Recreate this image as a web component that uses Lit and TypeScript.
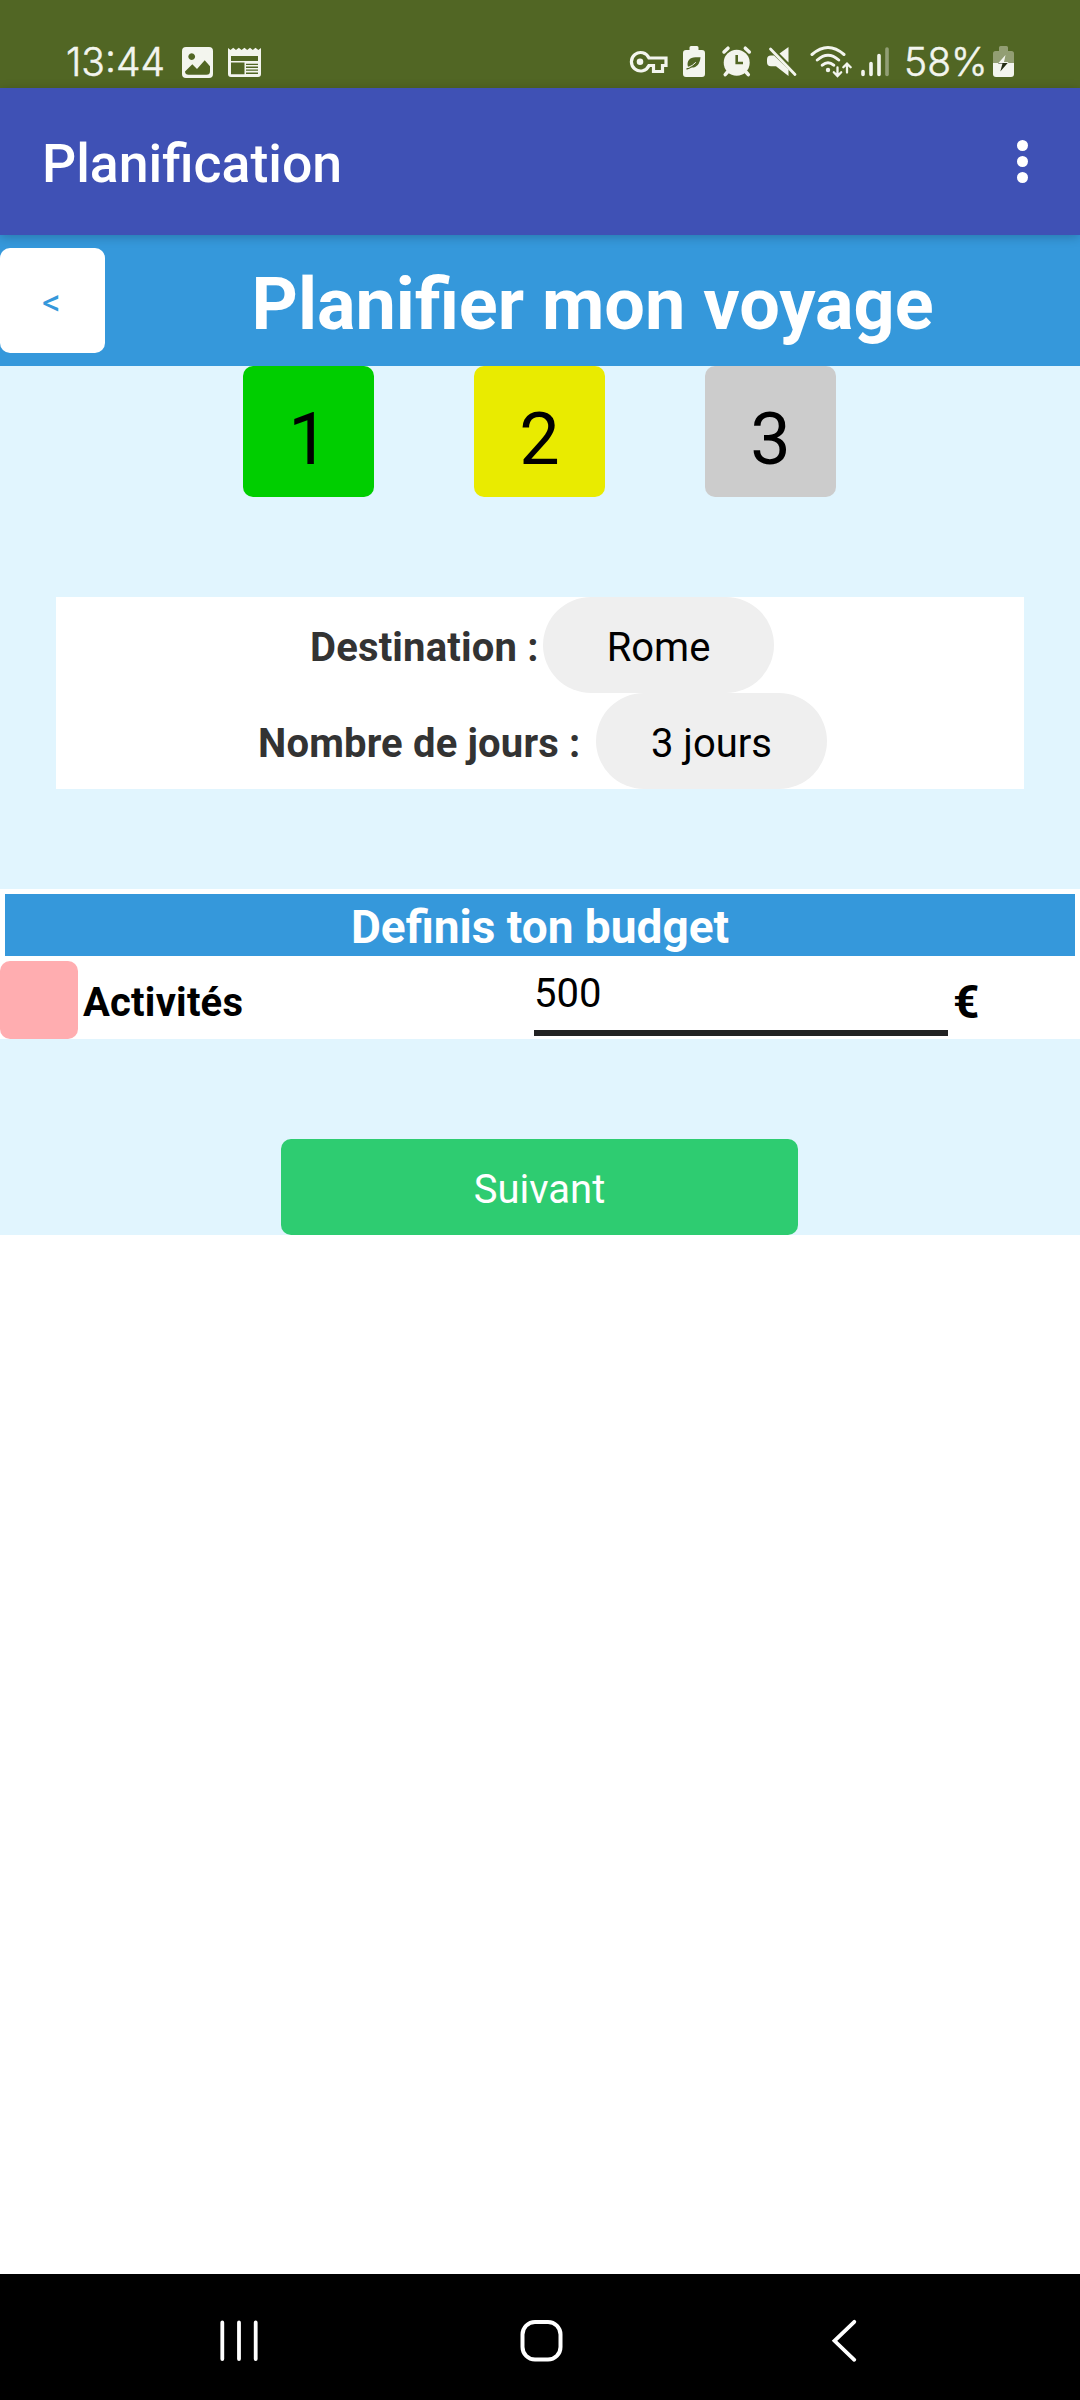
import { LitElement, html, css } from "lit";
import { customElement } from "lit/decorators.js";

@customElement("status-bar")
class StatusBar extends LitElement {
  static styles = css`
    :host { display: block; }
    .bar {
      box-sizing: border-box; height: 88px; background: #516624; color: #f3f5ee;
      display: flex; align-items: flex-start; justify-content: space-between;
      padding: 40px 62px 0 66px;
      font: 350 39px/44px Inter, Roboto, sans-serif;
    }
    .side { display: flex; height: 44px; }
    .clock { width: 114px; letter-spacing: 0; white-space: nowrap; -webkit-text-stroke: .5px #f3f5ee; }
    .percent { width: 88px; letter-spacing: 0; white-space: nowrap; -webkit-text-stroke: .5px #f3f5ee; }
    svg { display: block; height: 44px; }
  `;
  render() {
    return html`
      <div class="bar">
        <div class="side">
          <span class="clock">13:44</span>
          <svg width="90" height="44" viewBox="180 40 90 44" fill="#f3f5ee">
            <path fill-rule="evenodd" d="M186 47h23a4 4 0 0 1 4 4v23a4 4 0 0 1-4 4h-23a4 4 0 0 1-4-4V51a4 4 0 0 1 4-4zM191.7 53.2a3.4 3.4 0 1 0 .01 0zM185 71.5l7.3-7.2 4.7 4.7 7.7-8.8 5.3 6v5a3.5 3.5 0 0 1-3.500 3.500h-18a3.500 3.500 0 0 1-3.500-3.200z"/>
            <path fill-rule="evenodd" d="M228 48l2.500 2 2.700-2.200 2.800 2.200 2.800-2.200 2.800 2.200 2.800-2.200 2.800 2.200 2.800-2.200 2.800 2.200 2.700-2.200 2.800 2.200 2.700-2V74a3 3 0 0 1-3 3h-27a3 3 0 0 1-3-3zM231 56v5h27v-5zM231 62.600V74.300h13.500V62.600zM246 63.700v1.300h12v-1.300zM246 66.600v1.300h12v-1.300zM246 69.500v1.300h12v-1.300zM246 72.400v1.500h12v-1.500z"/>
          </svg>
        </div>
        <div class="side">
          <svg width="275" height="44" viewBox="629 40 275 44" fill="#f3f5ee">
            <path d="M649 58h17v7.500h-3.500v6h-9v-6H649a9.200 9.200 0 1 1 0-7.500z" fill="none" stroke="#f3f5ee" stroke-width="3.200"/>
            <circle cx="640" cy="61.700" r="3.300"/>
            <path d="M689.500 50v-2.500q0-1.500 1.500-1.500h6q1.500 0 1.500 1.500V50h3.500q3 0 3 3v21q0 3-3 3h-16q-3 0-3-3V53q0-3 3-3z"/>
            <path d="M700.500 57.200h-5c-6 0-9 4-7.600 9.400 6.500 3 12-1 12.600-9.400z" fill="#516624"/>
            <path d="M686.500 69q5.500-1 9-6.500" fill="none" stroke="#516624" stroke-width="1.300"/>
            <path d="M688.300 67.300q4-1.200 7.500-5" fill="none" stroke="#f3f5ee" stroke-width="1"/>
            <circle cx="736.700" cy="62.700" r="13"/>
            <path d="M724 52l4-3.800M749.300 52l-4-3.800M727.500 72l-2.300 2.700M746 72l2.300 2.700" stroke="#f3f5ee" stroke-width="3.500" stroke-linecap="round"/>
            <path d="M736.700 55v8h6.300" fill="none" stroke="#516624" stroke-width="2.600"/>
            <path d="M788.500 47v15.500L779.500 53.500zM771 55.500h3l14.500 14v6.500l-12.500-9.800h-5q-4 0-4-4v-2.700q0-4 4-4z"/>
            <path d="M770.500 49l24.500 25.500" stroke="#f3f5ee" stroke-width="2.800" stroke-linecap="round"/>
            <g fill="none" stroke="#f3f5ee" stroke-width="3" stroke-linecap="round">
              <path d="M812 54.500q16-14 32 0M817.300 60q10.700-9.500 21.400 0M822.300 65.200q5.700-5 11.400 0"/>
              <path d="M837.500 67.500v8M833.800 72.300l3.700 3.700 3.700-3.700M847 72.500v-8.500M843.300 67.300l3.700-3.700 3.700 3.700" stroke-width="2.300"/>
            </g>
            <circle cx="828" cy="70" r="2.200"/>
            <g stroke="#f3f5ee" stroke-width="3.600" stroke-linecap="round">
              <path d="M863 71.500v3M871 63.500v11M879 55.500v19"/>
              <path d="M887 49v25.500" opacity=".4"/>
            </g>
          </svg>
          <span class="percent">58%</span>
          <svg width="26" height="44" viewBox="992 40 26 44">
            <path d="M999 51v-3.500q0-1.500 1.500-1.500h6q1.500 0 1.500 1.500V51h3.500q2.500 0 2.500 2.500V63h-21v-9.500q0-2.500 2.500-2.500z" fill="#929e73"/>
            <path d="M993 63h21v11q0 3-3 3h-15q-3 0-3-3z" fill="#f3f5ee"/>
            <path d="M1005.500 55l-7.500 8.500h4.500l-2.200 7.500 8.200-9h-4.500z" fill="#f3f5ee"/>
            <path d="M998 63.500l.5-.5h9.200l-7.400 8.500 2.200-8z" fill="#222b12"/>
          </svg>
        </div>
      </div>
    `;
  }
}

@customElement("nav-bar")
class NavBar extends LitElement {
  static styles = css`
    :host { display: block; }
    .nav {
      box-sizing: border-box; height: 126px; background: #000; padding: 0 215px 0 216px;
      display: flex; align-items: center; justify-content: space-between;
    }
    svg { display: block; padding-top: 8px; }
  `;
  render() {
    return html`
      <div class="nav">
        <svg width="46" height="46" viewBox="216 2318 46 46"><path d="M222.300 2322.500v36.500M239 2322.500v36.500M255.700 2322.500v36.500" stroke="#fff" stroke-width="3.800" stroke-linecap="round"/></svg>
        <svg width="46" height="46" viewBox="517.500 2318 46 46"><rect x="522" y="2322" width="38" height="37.500" rx="12.500" fill="none" stroke="#fff" stroke-width="4"/></svg>
        <svg width="46" height="46" viewBox="819 2318 46 46"><path d="M854.300 2321.800L834.500 2340.800l19.800 19" fill="none" stroke="#fff" stroke-width="3.800" stroke-linecap="round"/></svg>
      </div>
    `;
  }
}

@customElement("app-root")
class AppRoot extends LitElement {
  static styles = css`
    :host {
      display: flex; flex-direction: column; width: 1080px; height: 2400px;
      background: #fff; font: 400 40px/1.172 Roboto, sans-serif; color: #000; overflow: hidden;
    }
    .appbar {
      box-sizing: border-box; height: 147px; background: #3f51b5; color: #fff;
      display: flex; align-items: center; justify-content: space-between;
      padding: 5px 52px 0 42px; position: relative; z-index: 1;
      box-shadow: 0 2px 10px rgba(0, 0, 0, .22);
    }
    .appname { font-size: 53.6px; font-weight: 500; white-space: nowrap; }
    .dots { display: flex; flex-direction: column; gap: 5px; padding-bottom: 5px; }
    .dot { width: 11px; height: 11px; border-radius: 50%; background: #fff; }
    .screen { background: #e1f5fe; flex: none; }
    .header { height: 131px; background: #3598db; display: flex; align-items: center; }
    .back {
      box-sizing: border-box; width: 105px; height: 105px; border-radius: 10px; background: #fff;
      color: #3598db; display: flex; align-items: center; justify-content: center; font-size: 37px;
      padding: 5px 2px 0 0;
    }
    .title { flex: 1; text-align: center; color: #fff; font-size: 72px; font-weight: 700; padding-top: 10px; }
    .steps { display: flex; justify-content: center; gap: 100px; padding-right: 1px; }
    .step {
      box-sizing: border-box; width: 131px; height: 131px; border-radius: 10px; padding-top: 18px;
      display: flex; align-items: center; justify-content: center; font-size: 72px;
    }
    .done { background: #00ce00; }
    .current { background: #e9eb00; }
    .todo { background: #ccc; }
    .summary { margin: 100px 56px; background: #fff; }
    .row { display: flex; align-items: center; height: 96px; }
    .destination { padding-left: 254px; }
    .days { padding-left: 202px; }
    .label { color: #333; font-weight: 700; white-space: nowrap; padding-top: 7px; letter-spacing: .17px; }
    .destination .label { width: 233px; }
    .days .label { width: 338px; }
    .pill {
      box-sizing: border-box; width: 231px; height: 96px; border-radius: 48px; background: #efefef;
      display: flex; align-items: center; justify-content: center; padding-top: 7px;
    }
    .budget { background: #fff; padding-top: 5px; }
    .caption {
      box-sizing: border-box; height: 62px; margin: 0 5px 5px; background: #3598db; color: #fff;
      display: flex; align-items: center; justify-content: center; padding-top: 5px;
      font-size: 46px; font-weight: 700;
    }
    .entry { display: grid; grid-template-columns: 78px 456px 414px 1fr; height: 78px; align-items: center; }
    .swatch { height: 78px; border-radius: 10px; background: #ffadb0; }
    .category { font-weight: 700; padding: 6px 0 0 5px; letter-spacing: .2px; }
    .amount { align-self: start; height: 69px; line-height: 65px; border-bottom: 6px solid #222; }
    .currency { font-size: 46px; font-weight: 700; padding: 5px 0 0 5px; }
    .next {
      box-sizing: border-box; width: 517px; height: 96px; margin: 100px 0 0 281px; border-radius: 10px;
      background: #2ecc71; color: #fff; display: flex; align-items: center; justify-content: center;
      padding-top: 7px;
    }
    .actions { display: flex; }
    .blank { flex: 1; }
  `;
  render() {
    return html`
      <status-bar></status-bar>
      <div class="appbar">
        <span class="appname">Planification</span>
        <div class="dots"><i class="dot"></i><i class="dot"></i><i class="dot"></i></div>
      </div>
      <div class="screen">
        <div class="header"><div class="back">&lt;</div><div class="title">Planifier mon voyage</div></div>
        <div class="steps">
          <div class="step done">1</div><div class="step current">2</div><div class="step todo">3</div>
        </div>
        <div class="summary">
          <div class="row destination"><span class="label">Destination :</span><span class="pill">Rome</span></div>
          <div class="row days"><span class="label">Nombre de jours :</span><span class="pill">3 jours</span></div>
        </div>
        <div class="budget">
          <div class="caption">Definis ton budget</div>
          <div class="entry">
            <div class="swatch"></div><div class="category">Activités</div>
            <div class="amount">500</div><div class="currency">€</div>
          </div>
        </div>
        <div class="actions"><div class="next">Suivant</div></div>
      </div>
      <div class="blank"></div>
      <nav-bar></nav-bar>
    `;
  }
}
